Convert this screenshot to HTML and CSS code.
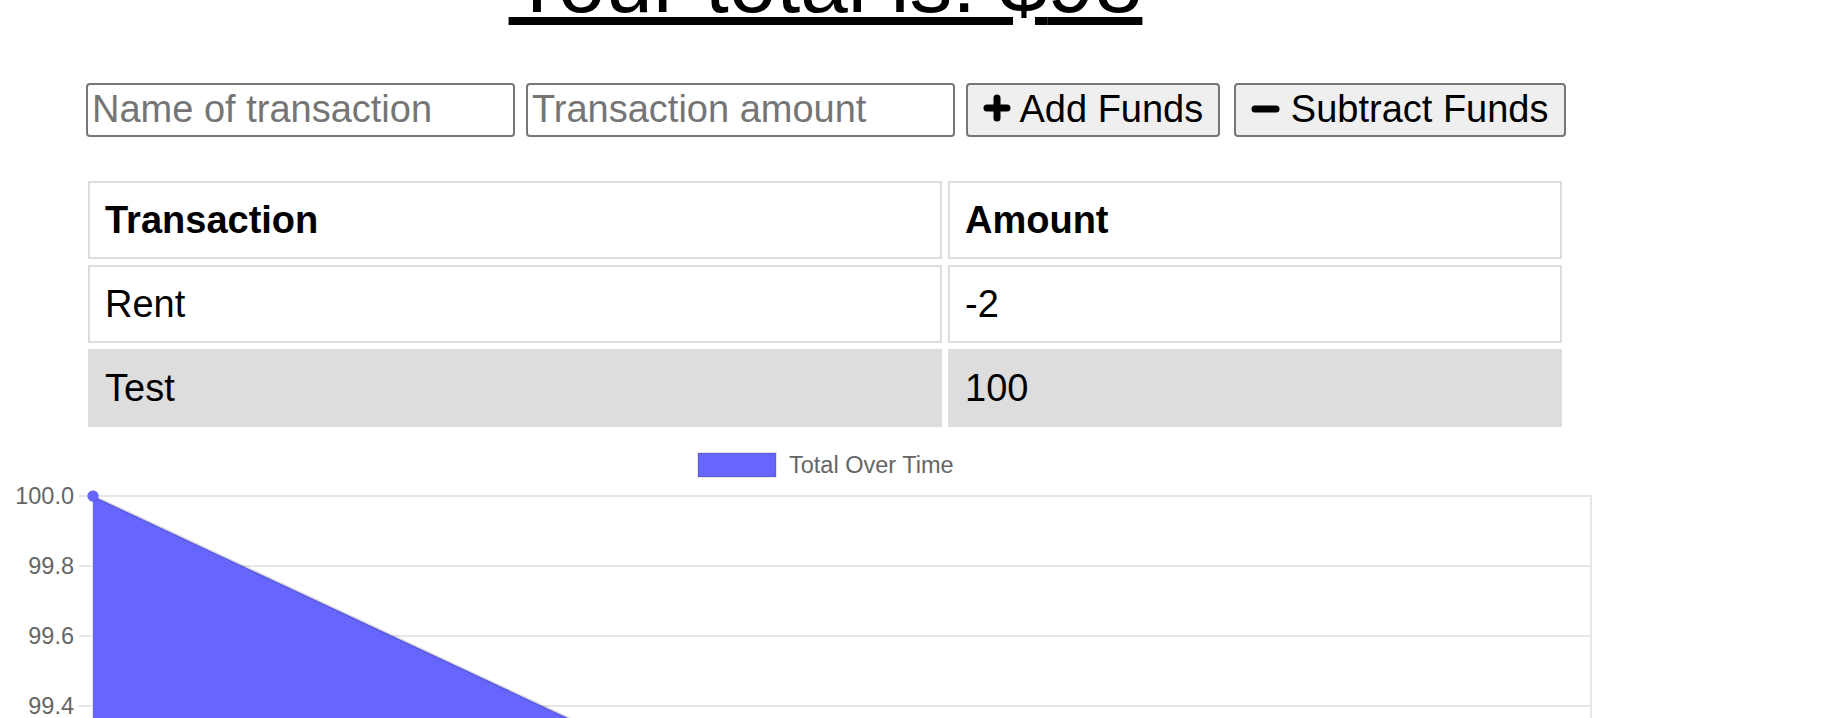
FILE: index.html
```html
<!DOCTYPE html>
<html lang="en">
<head>
<meta charset="utf-8">
<title>Budget Tracker</title>
<link rel="stylesheet" href="styles.css">
</head>
<body>
<div class="wrap">
  <h1 class="total">Your total is: $<span class="total-value">98</span></h1>
  <form class="controls" onsubmit="return false">
    <input class="field" type="text" placeholder="Name of transaction">
    <input class="field" type="number" placeholder="Transaction amount">
    <button class="btn" type="button"><svg class="icon" viewBox="0 0 28 28" aria-hidden="true"><path d="M14 4v20M4 14h20" stroke="#000" stroke-width="7" stroke-linecap="round"/></svg> Add Funds</button>
    <button class="btn btn-sub" type="button"><svg class="icon" viewBox="0 0 29 28" aria-hidden="true"><path d="M4 14h21" stroke="#000" stroke-width="7" stroke-linecap="round"/></svg> Subtract Funds</button>
  </form>
  <table class="tx">
    <thead>
      <tr><th class="col-name">Transaction</th><th>Amount</th></tr>
    </thead>
    <tbody>
      <tr><td>Rent</td><td>-2</td></tr>
      <tr class="alt"><td>Test</td><td>100</td></tr>
    </tbody>
  </table>
</div>
<div class="chart">
  <svg class="chart-svg" width="1600" height="285" viewBox="0 0 1600 285">
    <g class="legend">
      <rect x="698" y="20" width="78" height="24" fill="#6666ff" stroke="rgba(0,0,0,0.1)" stroke-width="2"/>
      <text x="789" y="40" class="chart-text">Total Over Time</text>
    </g>
    <g class="grid" stroke="#e6e6e6" stroke-width="2">
      <line x1="79" y1="63" x2="1592" y2="63"/>
      <line x1="79" y1="133" x2="1592" y2="133"/>
      <line x1="79" y1="203" x2="1592" y2="203"/>
      <line x1="79" y1="273" x2="1592" y2="273"/>
      <line x1="93" y1="63" x2="93" y2="285"/>
      <line x1="1591" y1="62" x2="1591" y2="285"/>
    </g>
    <g class="yaxis">
      <text x="74" y="71" text-anchor="end" class="chart-text">100.0</text>
      <text x="74" y="141" text-anchor="end" class="chart-text">99.8</text>
      <text x="74" y="211" text-anchor="end" class="chart-text">99.6</text>
      <text x="74" y="281" text-anchor="end" class="chart-text">99.4</text>
    </g>
    <polygon points="93,63 1591,763 1591,800 93,800" fill="#6666ff"/>
    <line x1="93" y1="63" x2="1591" y2="763" stroke="rgba(0,0,0,0.12)" stroke-width="3"/>
    <circle cx="93" cy="63" r="5.5" fill="#6666ff" stroke="rgba(0,0,0,0.1)" stroke-width="1"/>
  </svg>
</div>
</body>
</html>
```

FILE: styles.css
```css
html, body {
  margin: 0;
  padding: 0;
  background: #fff;
}

body {
  font-family: "Liberation Sans", Arial, sans-serif;
  color: #000;
  overflow: hidden;
}

.wrap {
  margin-left: 82px;
  width: 1487px;
}

.total {
  margin: -60px 0 57px;
  font-size: 85.5px;
  line-height: 85.5px;
  font-weight: 400;
  text-align: center;
  text-decoration: underline;
}

.controls {
  display: flex;
  align-items: center;
  gap: 11px;
  margin: 0 0 0 4px;
  height: 54px;
}

.field {
  box-sizing: border-box;
  width: 429px;
  height: 54px;
  margin: 0;
  padding: 0 4px;
  border: 2px solid #767676;
  border-radius: 4px;
  font-family: "Liberation Sans", Arial, sans-serif;
  font-size: 38px;
  color: #000;
  background: #fff;
  -moz-appearance: textfield;
}

.field::placeholder {
  color: #757575;
}

.field::-webkit-outer-spin-button,
.field::-webkit-inner-spin-button {
  -webkit-appearance: none;
  margin: 0;
}

.btn {
  box-sizing: border-box;
  height: 54px;
  margin: 0;
  padding: 0 15px;
  border: 2px solid #767676;
  border-radius: 4px;
  background: #efefef;
  font-family: "Liberation Sans", Arial, sans-serif;
  font-size: 38px;
  color: #000;
  display: inline-flex;
  align-items: center;
  white-space: pre;
}

.btn-sub {
  margin-left: 3px;
}

.icon {
  width: 28px;
  height: 28px;
  display: block;
  margin-top: -4px;
}

.btn-sub .icon {
  width: 29px;
  margin-top: -1px;
}

.tx {
  margin-top: 38px;
  width: 1486px;
  table-layout: fixed;
  border-collapse: separate;
  border-spacing: 6px;
  font-size: 38px;
  line-height: 44px;
}

.tx th,
.tx td {
  box-sizing: border-box;
  border: 2px solid #dddddd;
  padding: 15px 15px;
  text-align: left;
}

.tx th {
  font-weight: 700;
}

.col-name {
  width: 854px;
}

.tx .alt td {
  background: #dddddd;
  border-color: #dddddd;
}

.chart {
  height: 285px;
  overflow: hidden;
}

.chart-svg {
  display: block;
}

.chart-text {
  font-family: "Liberation Sans", Arial, sans-serif;
  font-size: 23.5px;
  fill: #666;
}
```
